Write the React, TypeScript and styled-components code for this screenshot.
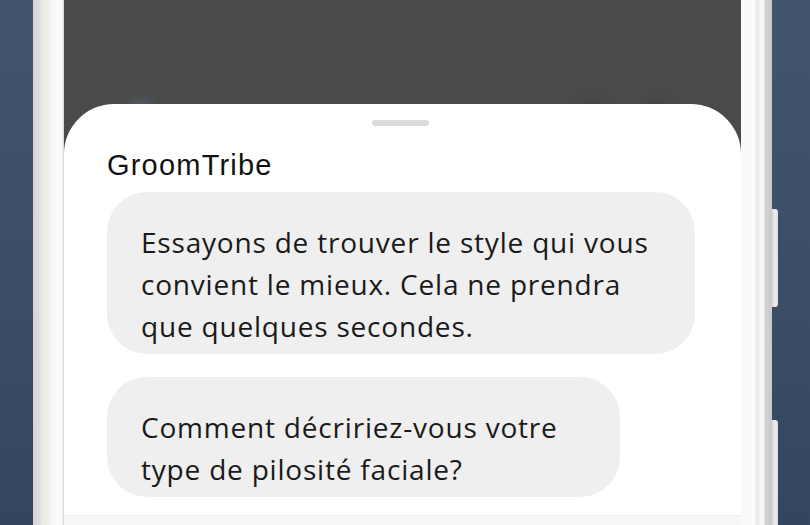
import React from 'react'
import styled, { createGlobalStyle } from 'styled-components'

const GlobalStyle = createGlobalStyle`
  html, body {
    margin: 0;
    padding: 0;
  }
  body {
    width: 810px;
    height: 525px;
    overflow: hidden;
    background: linear-gradient(180deg, #41556e 0%, #3a4d65 60%, #33465d 100%);
    font-family: "Open Sans", "Noto Sans", sans-serif;
  }
`

const Stage = styled.div`
  width: 810px;
  height: 525px;
  overflow: hidden;
  display: flex;
  align-items: flex-start;
  padding-left: 33px;
  box-sizing: border-box;
`

const Phone = styled.div`
  position: relative;
  width: 739px;
  height: 560px;
  display: flex;
  padding: 0 31px;
  box-sizing: border-box;
  background: linear-gradient(
    90deg,
    #d4d4d4 0px,
    #dedede 7px,
    #e9e9e9 8px,
    #eeeeee 16px,
    #f8f8f8 18px,
    #fafafa 29px,
    #dcdcdc 30px,
    #dcdcdc 31px,
    #4a4a4a 31px,
    #4a4a4a 708px,
    #f9f9f9 708px,
    #fbfbfb 722px,
    #ebebeb 723px,
    #ebebeb 726px,
    #f7f7f7 727px,
    #f4f4f4 731px,
    #d2d2d2 732px,
    #c9c9c9 739px
  );
`

const SideButton = styled.div<{ top: number; height: number }>`
  position: absolute;
  right: -6px;
  top: ${({ top }) => top}px;
  width: 6px;
  height: ${({ height }) => height}px;
  border-radius: 0 3px 3px 0;
  background: linear-gradient(90deg, #d6d6d6, #eeeeee 60%, #dcdcdc);
`

const Screen = styled.div`
  flex: 1;
  display: flex;
  flex-direction: column;
  background: #4a4a4a;
`

const AppBar = styled.div`
  height: 104px;
  display: flex;
  align-items: flex-end;
  padding: 0 70px 0 64px;
  box-sizing: border-box;
  gap: 40px;
`

const GhostIcon = styled.div<{ tint: string }>`
  width: 26px;
  height: 26px;
  margin-bottom: -22px;
  border-radius: 50%;
  background: ${({ tint }) => tint};
  filter: blur(5px);
  opacity: 0.55;
`

const Spacer = styled.div`
  flex: 1;
`

const Sheet = styled.div`
  position: relative;
  z-index: 1;
  flex: 1;
  display: flex;
  flex-direction: column;
  background: #ffffff;
  border-radius: 50px 50px 0 0;
  padding: 16px 0 0;
`

const Handle = styled.div`
  align-self: center;
  width: 57px;
  height: 6px;
  border-radius: 3px;
  background: #dadada;
  margin-left: -4px;
`

const Title = styled.h1`
  margin: 23px 0 0 43px;
  font-family: "Liberation Sans", Arial, sans-serif;
  font-weight: 400;
  font-size: 29px;
  line-height: 32px;
  letter-spacing: 1.2px;
  color: #111111;
`

const Thread = styled.div`
  display: flex;
  flex-direction: column;
  align-items: flex-start;
  gap: 23px;
  padding: 11px 0 0 43px;
`

const Bubble = styled.div<{ width: number }>`
  width: ${({ width }) => width}px;
  box-sizing: border-box;
  padding: 29px 20px 7px 34px;
  background: #efefef;
  border-radius: 40px;
  font-family: "Open Sans", "Noto Sans", sans-serif;
  font-size: 28px;
  line-height: 42px;
  letter-spacing: 0.8px;
  color: #1a1a1a;
  white-space: nowrap;
`

const Composer = styled.div`
  margin-top: 18px;
  height: 30px;
  background: #f6f7f9;
  border-top: 1px solid #eceef2;
`

export default function App() {
  return (
    <>
      <GlobalStyle />
      <Stage>
        <Phone>
          <SideButton top={209} height={98} />
          <SideButton top={420} height={140} />
          <Screen>
            <AppBar>
              <GhostIcon tint="#5b6f8c" />
              <Spacer />
              <GhostIcon tint="#3c4048" />
              <GhostIcon tint="#3a3f46" />
            </AppBar>
            <Sheet>
              <Handle />
              <Title>GroomTribe</Title>
              <Thread>
                <Bubble width={588}>
                  Essayons de trouver le style qui vous
                  <br />
                  convient le mieux. Cela ne prendra
                  <br />
                  que quelques secondes.
                </Bubble>
                <Bubble width={513}>
                  Comment décririez-vous votre
                  <br />
                  type de pilosité faciale?
                </Bubble>
              </Thread>
              <Composer />
            </Sheet>
          </Screen>
        </Phone>
      </Stage>
    </>
  )
}
